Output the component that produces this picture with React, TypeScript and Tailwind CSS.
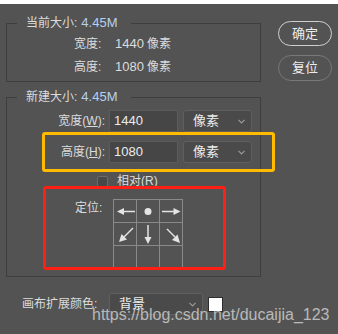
// Photoshop "canvas size" dialog, annotated screenshot

const Chevron = () => (
  <svg className="w-[7px] h-[5px]" viewBox="0 0 7 5" fill="none" stroke="#9a9a9a" strokeWidth={1.2}>
    <path d="M0.5 0.8L3.5 3.8L6.5 0.8" />
  </svg>
);

function Dropdown({ label, width }: { label: string; width: string }) {
  return (
    <div className={`${width} h-[22px] flex items-center justify-between pl-[9px] pr-[6px] bg-[#4a4a4a] border border-[#5f5f5f] rounded-[3px] text-[13px] text-[#ececec]`}>
      <span>{label}</span>
      <Chevron />
    </div>
  );
}

function Field({ value }: { value: string }) {
  return (
    <div className="w-[69px] h-[22px] flex items-center pl-[4px] bg-[#464646] border border-[#5b5b5b] text-[13px] text-[#ececec]">
      {value}
    </div>
  );
}

const arrows = [
  // left
  <svg key="l" className="w-[22px] h-[22px]" viewBox="0 0 22 22" fill="#e4e4e4" stroke="#e4e4e4">
    <path d="M21 11.5H9" strokeWidth={1.5} />
    <path d="M3 11.5L10 8V15Z" stroke="none" />
  </svg>,
  <svg key="c" className="w-[22px] h-[22px]" viewBox="0 0 22 22" fill="#e4e4e4">
    <circle cx={11} cy={11.5} r={3.5} />
  </svg>,
  <svg key="r" className="w-[22px] h-[22px]" viewBox="0 0 22 22" fill="#e4e4e4" stroke="#e4e4e4">
    <path d="M2 11.5H14" strokeWidth={1.5} />
    <path d="M20.5 11.5L13.5 8V15Z" stroke="none" />
  </svg>,
  <svg key="dl" className="w-[22px] h-[22px]" viewBox="0 0 22 22" fill="#e4e4e4" stroke="#e4e4e4">
    <path d="M19 5L10 14" strokeWidth={1.5} />
    <path d="M5 19L7.5 11L13 16.5Z" stroke="none" />
  </svg>,
  <svg key="d" className="w-[22px] h-[22px]" viewBox="0 0 22 22" fill="#e4e4e4" stroke="#e4e4e4">
    <path d="M11 2V15" strokeWidth={1.5} />
    <path d="M11 21L7.5 14H14.5Z" stroke="none" />
  </svg>,
  <svg key="dr" className="w-[22px] h-[22px]" viewBox="0 0 22 22" fill="#e4e4e4" stroke="#e4e4e4">
    <path d="M7 6L15 14" strokeWidth={1.5} />
    <path d="M20 20L12 17L17.5 11.5Z" stroke="none" />
  </svg>,
  null,
  null,
  null,
];

export default function App() {
  return (
    <div className="relative w-[338px] h-[334px] overflow-hidden bg-[#535353] text-[#dcdcdc] text-[12px] leading-[16px] font-['Liberation_Sans','Noto_Sans_CJK_SC',sans-serif]">
      <div className="h-[4px] bg-white" />

      <div className="flex">
        <div className="ml-[6px] w-[255px]">
          {/* current size */}
          <fieldset className="mt-[11px] border border-[#3e3e3e] pt-[1px] pb-[3px]">
            <legend className="ml-[10px] pl-[9px] pr-[14px] leading-[16px]">
              当前大小:<span className="ml-[4px] text-[13px] text-[#b6d0ef]">4.45M</span>
            </legend>
            {[
              ['宽度:', '1440'],
              ['高度:', '1080'],
            ].map(([label, value]) => (
              <div key={label} className="h-[23px] flex items-center pl-[67px]">
                <span className="w-[41px]">{label}</span>
                <span className="w-[32px] text-[13px]">{value}</span>
                <span>像素</span>
              </div>
            ))}
          </fieldset>

          {/* new size */}
          <fieldset className="mt-[7px] border border-[#3e3e3e] pt-[5px] pb-[7px]">
            <legend className="ml-[10px] pl-[9px] pr-[14px] leading-[16px]">
              新建大小:<span className="ml-[4px] text-[13px] text-[#b6d0ef]">4.45M</span>
            </legend>
            <div className="flex items-center h-[22px]">
              <span className="w-[102px] pr-[4px] text-right">
                宽度(<span className="underline">W</span>):
              </span>
              <Field value="1440" />
              <div className="ml-[5px]">
                <Dropdown label="像素" width="w-[69px]" />
              </div>
            </div>
            <div className="flex items-center h-[22px] mt-[9px]">
              <span className="w-[102px] pr-[4px] text-right">
                高度(<span className="underline">H</span>):
              </span>
              <Field value="1080" />
              <div className="ml-[5px]">
                <Dropdown label="像素" width="w-[69px]" />
              </div>
            </div>
            <div className="flex items-center h-[12px] mt-[12px] pl-[90px]">
              <div className="w-[11px] h-[11px] bg-[#474747] border border-[#6a6a6a] rounded-[2px]" />
              <span className="ml-[9px]">
                相对(<span className="underline">R</span>)
              </span>
            </div>
            <div className="flex mt-[12px] pl-[68px]">
              <span className="w-[38px] mt-[1px]">定位:</span>
              <div className="grid grid-cols-3 border-l border-t border-[#8a8a8a]">
                {arrows.map((a, i) => (
                  <div key={i} className="w-[23px] h-[23px] border-r border-b border-[#8a8a8a]">
                    {a}
                  </div>
                ))}
              </div>
            </div>
          </fieldset>
        </div>

        <div className="ml-[17px] mt-[17px] flex flex-col gap-[9px]">
          <button className="w-[54px] h-[25px] rounded-full border-[1.5px] border-[#cfcfcf] text-[13px] text-[#eeeeee]">确定</button>
          <button className="w-[54px] h-[26px] rounded-full border-[1.5px] border-[#787878] text-[13px] text-[#eeeeee]">复位</button>
        </div>
      </div>

      {/* canvas extension colour */}
      <div className="flex items-center mt-[16px] h-[22px]">
        <span className="ml-[22px] w-[87px]">画布扩展颜色:</span>
        <Dropdown label="背景" width="w-[94px]" />
        <div className="ml-[5px] w-[15px] h-[15px] bg-white border border-[#2e2e2e]" />
      </div>

      {/* annotations */}
      <div className="absolute left-[42px] top-[132px] w-[233px] h-[40px] border-[3px] border-[#ffbb00] rounded-[3px]" />
      <div className="absolute left-[43px] top-[186px] w-[183px] h-[84px] border-[3px] border-[#ff1f14] rounded-[3px]" />
      <div className="absolute left-[92px] top-[306px] text-[16px] leading-[18px] text-white/60 whitespace-nowrap">
        https://blog.csdn.net/ducaijia_123
      </div>
    </div>
  );
}
